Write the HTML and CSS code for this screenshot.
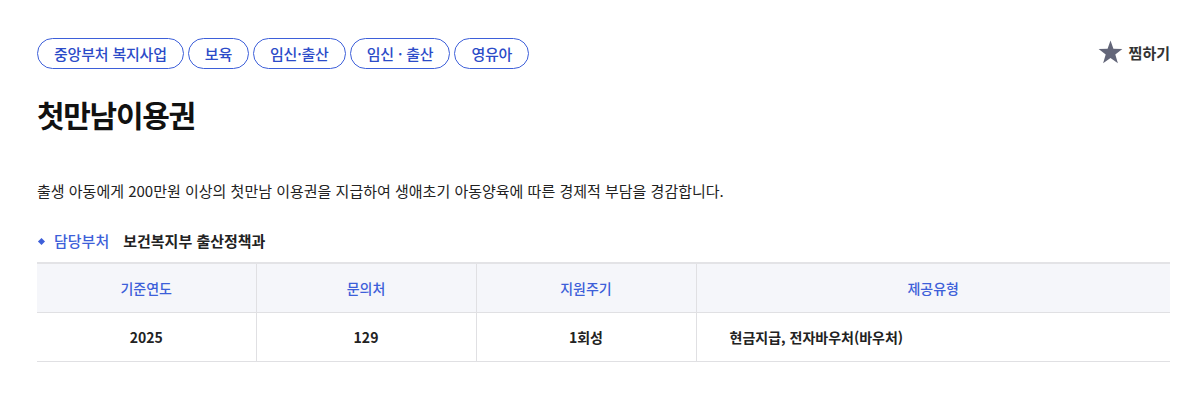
FILE: index.html
```html
<!DOCTYPE html>
<html lang="ko">
<head>
<meta charset="utf-8">
<link rel="stylesheet" href="styles.css">
</head>
<body>
<div class="page">
  <div class="top">
    <ul class="tags">
      <li class="tag">중앙부처 복지사업</li>
      <li class="tag">보육</li>
      <li class="tag">임신·출산</li>
      <li class="tag">임신 · 출산</li>
      <li class="tag">영유아</li>
    </ul>
    <button class="fav">
      <svg class="star" width="25" height="24" viewBox="0 0 24 23"><path d="M12 0.5 L14.8 8.4 L23.4 8.6 L16.6 13.8 L19.1 22.2 L12 17.2 L4.9 22.2 L7.4 13.8 L0.6 8.6 L9.2 8.4 Z" fill="#636679"/></svg>
      <span>찜하기</span>
    </button>
  </div>
  <h1 class="title">첫만남이용권</h1>
  <p class="desc">출생 아동에게 200만원 이상의 첫만남 이용권을 지급하여 생애초기 아동양육에 따른 경제적 부담을 경감합니다.</p>
  <div class="dept">
    <span class="dot"></span>
    <span class="dept-label">담당부처</span>
    <span class="dept-value">보건복지부 출산정책과</span>
  </div>
  <table class="info">
    <thead>
      <tr><th class="c1">기준연도</th><th class="c2">문의처</th><th class="c3">지원주기</th><th class="c4">제공유형</th></tr>
    </thead>
    <tbody>
      <tr><td>2025</td><td>129</td><td>1회성</td><td class="left">현금지급, 전자바우처(바우처)</td></tr>
    </tbody>
  </table>
</div>
</body>
</html>
```

FILE: styles.css
```css
* { box-sizing: border-box; }
html, body { margin: 0; padding: 0; background: #fff; }
body {
  font-family: "Noto Sans CJK KR", "Noto Sans", sans-serif;
  color: #222;
}
.page { padding: 38px 8px 0 37px; }
.top { display: flex; justify-content: space-between; align-items: flex-start; }
.tags { list-style: none; margin: 0; padding: 0; display: flex; gap: 4px; }
.tag {
  height: 31px;
  padding: 0 16px;
  border: 1px solid #3d5fd9;
  border-radius: 16px;
  color: #2c4bc8;
  font-size: 15px;
  font-weight: 500;
  line-height: 29px;
  letter-spacing: -0.2px;
}
.fav {
  display: flex; align-items: center; gap: 6px;
  background: none; border: 0; padding: 0; margin-top: 2px;
  font-family: inherit; font-size: 15px; font-weight: 700; color: #333;
  cursor: pointer;
}
.title {
  margin: 24px 0 0;
  font-size: 30px; font-weight: 700; color: #111;
  line-height: 42px;
  letter-spacing: -1.3px;
}
.desc {
  margin: 44px 0 0;
  font-size: 15px; line-height: 24px; color: #222;
}
.dept { display: flex; align-items: center; margin-top: 27px; font-size: 15px; line-height: 22px; }
.dot { width: 5px; height: 5px; background: #3d5fd9; transform: rotate(45deg); margin: 0 10px 0 2px; }
.dept-label { color: #3d5fd9; font-weight: 500; margin-right: 14px; }
.dept-value { font-weight: 700; color: #222; }
.info {
  width: 100%;
  margin-top: 10px;
  border-collapse: collapse;
  border-top: 2px solid #e3e3e6;
  font-size: 14px;
}
.info th, .info td { border: 1px solid #e0e0e3; height: 49px; text-align: center; padding: 0; }
.info tr > :first-child { border-left: 0; }
.info tr > :last-child { border-right: 0; }
.info th { background: #f5f6fa; color: #3d5fd9; font-weight: 500; }
.info td { font-weight: 700; color: #222; }
.info td.left { text-align: left; padding-left: 33px; }
.info th.c1 { width: 219px; }
.info th.c2 { width: 220px; }
.info th.c3 { width: 220px; }
```
